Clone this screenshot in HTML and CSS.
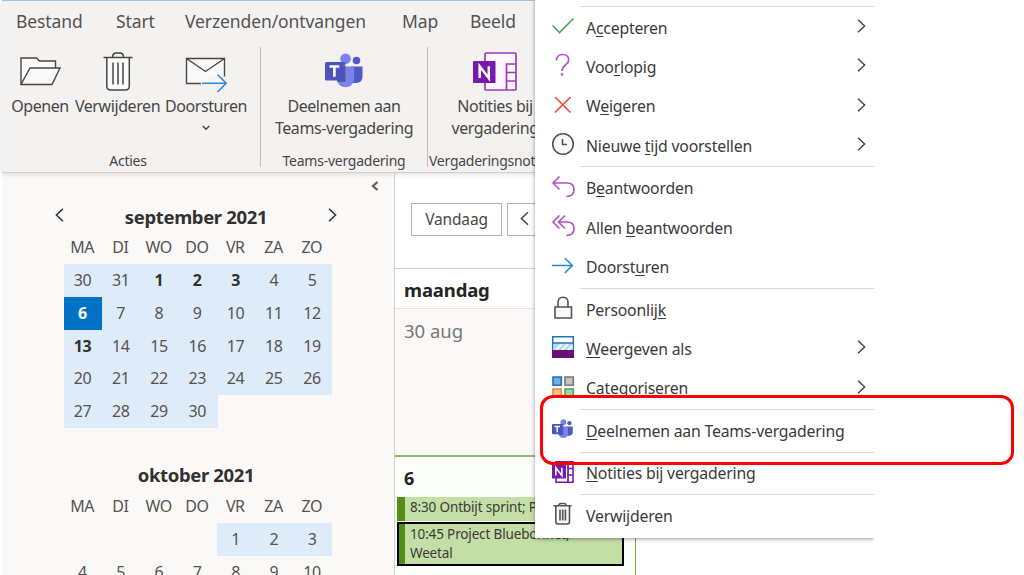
FILE: index.html
```html
<!DOCTYPE html>
<html lang="nl">
<head>
<meta charset="utf-8">
<title>Agenda</title>
<link rel="stylesheet" href="styles.css">
</head>
<body>
<svg class="defs" width="0" height="0">
  <symbol id="chev" viewBox="0 0 9 14"><path d="M1 .8 7.6 7 1 13.2" fill="none" stroke="currentColor" stroke-width="1.5"/></symbol>
  <symbol id="teams" viewBox="0 0 38 36">
    <circle cx="31.5" cy="7.5" r="3.8" fill="#5059c9"/><path d="M26 13.5h11.5V24a6 6 0 0 1-6 6H26z" fill="#5059c9"/>
    <circle cx="20.5" cy="5.8" r="5.3" fill="#7b83eb"/><path d="M12 13.5h17V27a8.6 8.6 0 0 1-17 0z" fill="#7b83eb"/>
    <path d="M12 9h8.5v20H12z" fill="#444c9c" opacity=".75"/>
    <rect x="0" y="9" width="18.5" height="18.5" rx="1.5" fill="#4b53bc"/>
    <path d="M4.5 13.5h9.8M9.4 13.5v10.2" stroke="#fff" stroke-width="2.6" fill="none"/>
  </symbol>
  <symbol id="onenote" viewBox="0 0 44 40">
    <rect x="12" y="1" width="31" height="37" rx="1" fill="#fcf8fe" stroke="#9a3bbd" stroke-width="1.7"/>
    <path d="M33.5 38V12H43M33.5 20.5H43M33.5 29H43" fill="none" stroke="#9a3bbd" stroke-width="1.7"/>
    <rect x="0" y="9" width="22.5" height="22" rx="1" fill="#7719aa"/>
    <path d="M6.7 26V14.3L15.8 26V14.3" fill="none" stroke="#fff" stroke-width="2.5"/>
  </symbol>
</svg>
<div class="screen">
  <div class="window">
    <header class="ribbon">
      <nav class="tabs">
        <span class="tab t1">Bestand</span><span class="tab t2">Start</span><span class="tab t3">Verzenden/ontvangen</span><span class="tab t4">Map</span><span class="tab t5">Beeld</span>
      </nav>
      <div class="groups">
        <section class="group g1">
          <div class="cmds">
            <div class="cmd c1">
              <svg class="ico" width="42" height="40"><path d="M2 32.500V6h15.500l3 3H36.500v7" fill="#fafafa" stroke="#484644" stroke-width="1.400"/><path d="M2 32.500 11 16H41L33 32.500z" fill="#fafafa" stroke="#484644" stroke-width="1.400"/></svg>
              <span>Openen</span>
            </div>
            <div class="cmd c2">
              <svg class="ico" width="30" height="40"><path d="M3.500 5.500h23V35q0 3-3 3h-17q-3 0-3-3z" fill="#fafafa"/><path d="M.5 5.500h29M9.500 5.500q0-4.500 4-4.500h3q4 0 4 4.500M3.800 5.500V34q0 4 4 4h14.500q4 0 4-4V5.500M10 10.500v22M15 10.500v22M20 10.500v22" fill="none" stroke="#484644" stroke-width="1.500"/></svg>
              <span>Verwijderen</span>
            </div>
            <div class="cmd c3">
              <svg class="ico" width="42" height="40"><path d="M1.500 6.500h38v25h-38z" fill="#fafafa"/><path d="M16 31.500H1.500v-25h38V25M1.500 6.500l19 13 19-13" fill="none" stroke="#484644" stroke-width="1.400"/><path d="M23 24h19v16H23z" fill="#f3f2f1" opacity=".6"/><path d="M17 31.300h23M32.500 22.500 41.200 31.300 32.500 40" fill="none" stroke="#2b88d8" stroke-width="1.500"/></svg>
              <span>Doorsturen</span>
              <svg class="down" width="8" height="6"><path d="M.8 1 4 4.200 7.200 1" fill="none" stroke="#484644" stroke-width="1.500"/></svg>
            </div>
          </div>
          <div class="gname">Acties</div>
        </section>
        <section class="group g2">
          <div class="cmds">
            <div class="cmd"><svg class="ico teams-big" width="38" height="36"><use href="#teams"/></svg><span>Deelnemen aan<br>Teams-vergadering</span></div>
          </div>
          <div class="gname">Teams-vergadering</div>
        </section>
        <section class="group g3">
          <div class="cmds">
            <div class="cmd"><svg class="ico" width="44" height="40"><use href="#onenote"/></svg><span>Notities bij<br>vergadering</span></div>
          </div>
          <div class="gname">Vergaderingsnotities</div>
        </section>
      </div>
    </header>
    <div class="body">
      <aside class="side">
        <svg class="collapse" width="8" height="10"><path d="M6.500 1 2 5l4.500 4" fill="none" stroke="#605e5c" stroke-width="2.300"/></svg>
        <div class="month">
          <div class="mtitle"><svg class="mnav prev" width="9" height="14"><use href="#chev"/></svg><b>september 2021</b><svg class="mnav next" width="9" height="14"><use href="#chev"/></svg></div>
          <div class="dow"><span>MA</span><span>DI</span><span>WO</span><span>DO</span><span>VR</span><span>ZA</span><span>ZO</span></div>
          <div class="days">
            <i>30</i><i>31</i><i class="b">1</i><i class="b">2</i><i class="b">3</i><i>4</i><i>5</i>
            <i class="b today">6</i><i>7</i><i>8</i><i>9</i><i>10</i><i>11</i><i>12</i>
            <i class="b">13</i><i>14</i><i>15</i><i>16</i><i>17</i><i>18</i><i>19</i>
            <i>20</i><i>21</i><i>22</i><i>23</i><i>24</i><i>25</i><i>26</i>
            <i>27</i><i>28</i><i>29</i><i>30</i>
          </div>
        </div>
        <div class="month second">
          <div class="mtitle"><b>oktober 2021</b></div>
          <div class="dow"><span>MA</span><span>DI</span><span>WO</span><span>DO</span><span>VR</span><span>ZA</span><span>ZO</span></div>
          <div class="days">
            <i class="n"></i><i class="n"></i><i class="n"></i><i class="n"></i><i>1</i><i>2</i><i>3</i>
            <i class="n">4</i><i class="n">5</i><i class="n">6</i><i class="n">7</i><i class="n">8</i><i class="n">9</i><i class="n">10</i>
          </div>
        </div>
      </aside>
      <main class="cal">
        <div class="bar"><span class="btn today-btn">Vandaag</span><span class="btn back"><svg class="flip" width="9" height="15"><use href="#chev"/></svg></span></div>
        <div class="dayname">maandag</div>
        <div class="cell past">30 aug</div>
        <div class="cell now">
          <b class="num">6</b>
          <div class="ev">8:30 Ontbijt sprint; Plein</div>
          <div class="ev sel">10:45 Project Bluebonnet;<br>Weetal</div>
        </div>
      </main>
    </div>
  </div>

  <div class="menu">
    <hr>
    <div class="item"><svg width="24" height="24"><path d="M1.500 11.500 8.500 18.500 22.500 4.500" fill="none" stroke="#4aa564" stroke-width="1.600"/></svg><span>A<u>c</u>cepteren</span><svg class="sub" width="9" height="14"><use href="#chev"/></svg></div>
    <div class="item"><svg width="24" height="24"><path d="M5.500 7.500C5.500 3.500 8 1.500 11.500 1.500s6.200 2.200 6.200 5.400C17.700 12 11 12 11 18" fill="none" stroke="#b04fc0" stroke-width="1.700"/><circle cx="11" cy="21.500" r="1.300" fill="#b04fc0"/></svg><span>Voo<u>r</u>lopig</span><svg class="sub" width="9" height="14"><use href="#chev"/></svg></div>
    <div class="item"><svg width="24" height="24"><path d="M4 4 19.500 19.500M19.500 4 4 19.500" fill="none" stroke="#f04a3e" stroke-width="1.600"/></svg><span>W<u>e</u>igeren</span><svg class="sub" width="9" height="14"><use href="#chev"/></svg></div>
    <div class="item"><svg width="24" height="24"><circle cx="12" cy="12" r="10.300" fill="#fafafa" stroke="#55534f" stroke-width="1.600"/><path d="M11.500 7v5.500H16" fill="none" stroke="#55534f" stroke-width="1.600"/></svg><span>Nieuwe <u>t</u>ijd voorstellen</span><svg class="sub" width="9" height="14"><use href="#chev"/></svg></div>
    <hr>
    <div class="item"><svg width="24" height="24"><path d="M8.500 1.500 2 8l6.500 6.500M2 8h14q7 0 7 6.500 0 7-7.500 7" fill="none" stroke="#b04fc0" stroke-width="1.600"/></svg><span>B<u>e</u>antwoorden</span></div>
    <div class="item"><svg width="24" height="24"><path d="M8.500 1.500 2 8l6.500 6.500M14 1.500 7.500 8l6.500 6.500M8 8h8q7 0 7 6.500 0 7-7.500 7" fill="none" stroke="#b04fc0" stroke-width="1.600"/></svg><span>Allen <u>b</u>eantwoorden</span></div>
    <div class="item"><svg width="24" height="24"><path d="M1 11.500h20M13.800 4 21.300 11.500l-7.500 7.500" fill="none" stroke="#2b88d8" stroke-width="1.600"/></svg><span>Doorst<u>u</u>ren</span></div>
    <hr>
    <div class="item"><svg width="24" height="24"><path d="M4 11h16.500v11H4zM7 11V6.500q0-5.200 5-5.200t5 5.200V11" fill="#fafafa" stroke="#55534f" stroke-width="1.600"/></svg><span>Persoonlij<u>k</u></span></div>
    <div class="item"><svg width="24" height="24"><path d="M1.700 1.700h20.600v20H1.700z" fill="#fff" stroke="#1e72bd" stroke-width="1.500"/><path d="M2 8.500h20v7H2z" fill="#b5d6f0"/><path d="m5 15 6-6M11 15l6-6M17 15l4-4" stroke="#eef6fc" stroke-width="2"/><path d="M2 8h20" stroke="#1e72bd" stroke-width="1.500"/><path d="M1 15h22v8H1z" fill="#6b0f74"/></svg><span><u>W</u>eergeven als</span><svg class="sub" width="9" height="14"><use href="#chev"/></svg></div>
    <div class="item"><svg width="24" height="24"><g stroke-width="1.600"><path d="M2 2h8.300v8.300H2z" fill="#6fb0e4" stroke="#1e72bd"/><path d="M14 2h8.300v8.300H14z" fill="#c4c4c4" stroke="#797775"/><path d="M2 14h8.300v8.300H2z" fill="#fbc08c" stroke="#e8883a"/><path d="M14 14h8.300v8.300H14z" fill="#9cd5a8" stroke="#4aa564"/></g></svg><span>Categor<u>i</u>seren</span><svg class="sub" width="9" height="14"><use href="#chev"/></svg></div>
    <hr>
    <div class="item"><svg class="tm" width="21" height="20"><use href="#teams"/></svg><span><u>D</u>eelnemen aan Teams-vergadering</span></div>
    <hr>
    <div class="item"><svg width="24" height="24"><path d="M5 1.800h17v20.500H5z" fill="#fff" stroke="#7719aa" stroke-width="1.600"/><path d="M17 2v20M17 8.500h5M17 15h5" stroke="#7719aa" stroke-width="1.700"/><path d="M1 4.500h14v14H1z" fill="#7719aa"/><path d="M4.800 15.500V7.700l6 7.800V7.700" fill="none" stroke="#fff" stroke-width="1.600"/></svg><span><u>N</u>otities bij vergadering</span></div>
    <hr>
    <div class="item"><svg width="24" height="24"><path d="M4.500 4v15.500q0 2.500 2.500 2.500h9.500q2.500 0 2.500-2.500V4" fill="#f7f7f7"/><path d="M2.500 3.800h18M8 3.500q0-2 2-2h3q2 0 2 2M4.800 4v15.500q0 2.500 2.500 2.500h8.700q2.500 0 2.500-2.500V4M9 7.500v11M11.700 7.500v11M14.400 7.500v11" fill="none" stroke="#55534f" stroke-width="1.600"/></svg><span>Verwi<u>j</u>deren</span></div>
  </div>
  <div class="highlight"></div>
</div>
</body>
</html>
```

FILE: styles.css
```css
* { box-sizing: border-box; }
body { margin: 0; background: #fff; font-family: "Noto Sans", "Open Sans", sans-serif; color: #484644; }
.defs { position: absolute; }
svg { display: block; flex: none; overflow: visible; }
.screen { position: relative; width: 1024px; height: 575px; overflow: hidden; background: #fff; }
.window { width: 636px; height: 575px; padding-left: 2px; display: flex; flex-direction: column; }

.ribbon { height: 173px; flex: none; background: #f3f2f1; border-top: 1px solid #9dc3e6; border-bottom: 1px solid #d2d0ce; box-shadow: 0 1px 5px rgba(0,0,0,.14); z-index: 1; }
.tabs { height: 40px; display: flex; align-items: center; font-size: 17.500px; letter-spacing: -.1px; color: #555351; white-space: nowrap; }
.tab { flex: none; }
.t1 { margin-left: 14px; width: 100px; }
.t2 { width: 69px; }
.t3 { width: 217px; }
.t4 { width: 68px; }
.groups { display: flex; height: 130px; padding-top: 6px; }
.group { height: 120px; display: flex; flex-direction: column; justify-content: space-between; align-items: center; flex: none; border-right: 1px solid #c0bebc; }
.g1 { width: 259px; }
.g2 { width: 167px; }
.g3 { width: 134px; border: 0; }
.cmds { display: flex; padding-top: 5px; font-size: 16px; line-height: 22px; letter-spacing: -.42px; text-align: center; white-space: nowrap; }
.cmd { display: flex; flex-direction: column; align-items: center; }
.ico { margin-bottom: 3px; }
.teams-big { margin: 1px 0 6px; }
.g1 .cmds { margin-right: 5px; }
.c1 { width: 76px; }
.c2 { width: 79px; }
.c3 { width: 98px; }
.down { margin-top: 8px; }
.g1 .gname { margin-right: 6px; }
.gname { font-size: 14px; line-height: 18px; margin-bottom: -3px; letter-spacing: -.25px; white-space: nowrap; }

.body { display: flex; flex: 1; min-height: 0; }
.side { width: 393px; background: #faf9f8; border-right: 1px solid #d2d0ce; padding: 8px 0 0 62px; flex: none; overflow: hidden; }
.collapse { margin-left: 307px; }
.month { width: 268px; padding-top: 10px; }
.mtitle { height: 30px; display: flex; justify-content: center; align-items: center; position: relative; font-size: 18.500px; letter-spacing: -.35px; color: #323130; }
.mtitle b { margin-right: 4px; }
.mnav { position: absolute; top: 7px; }
.prev { left: -9px; transform: scaleX(-1); }
.next { right: -5px; }
.dow, .days { display: grid; grid-template-columns: repeat(7, 1fr); text-align: center; font-size: 16px; letter-spacing: -.4px; }
.dow { line-height: 32px; height: 33px; color: #555351; }
.dow span { margin-left: -2px; }
.days { grid-auto-rows: 32.800px; line-height: 33px; }
.days i { font-style: normal; background: #deecf9; color: #555351; margin-right: -.5px; padding-right: 2px; }
.days .b { font-weight: 700; color: #323130; }
.days .today { background: #0072c6; color: #fff; }
.days .n { background: none; }
.second { padding-top: 32px; }

.cal { flex: 1; border-right: 1px solid #70ad47; min-width: 0; display: flex; flex-direction: column; }
.bar { height: 96px; padding: 30px 0 0 16px; display: flex; gap: 6px; border-bottom: 1px solid #d2d0ce; flex: none; }
.btn { height: 33px; border: 1px solid #b5b3b1; display: flex; align-items: center; justify-content: center; font-size: 15.500px; line-height: 20px; padding-bottom: 2px; letter-spacing: -.15px; }
.today-btn { width: 91px; }
.back { width: 34px; margin-left: -1px; }
.flip { transform: scaleX(-1); }
.dayname { height: 40px; line-height: 42px; padding-left: 9px; font-weight: 700; font-size: 18.500px; letter-spacing: -.15px; color: #252423; border-bottom: 1px solid #e3e1df; flex: none; }
.past { height: 146px; background: #faf9f8; padding: 9px; font-size: 18.500px; line-height: 26px; color: #797775; flex: none; }
.now { flex: 1; background: #fcfefa; border-top: 2px solid #92b973; padding-left: 2px; color: #3b3a39; }
.num { display: block; height: 40px; line-height: 43px; padding-left: 7px; font-size: 18px; color: #252423; }
.ev { height: 24px; line-height: 20px; font-size: 13.500px; letter-spacing: -.15px; background: #c3dfa5; border-left: 8px solid #528d15; padding-left: 5px; width: 227px; white-space: nowrap; }
.sel { margin-top: 1px; height: 44px; line-height: 18.500px; border: 0; outline: 2px solid #000; outline-offset: -2px; box-shadow: inset 8px 0 #528d15; padding: 3px 0 0 13px; }

.menu { position: absolute; z-index: 2; left: 535px; top: 0; width: 339px; height: 538px; padding-top: 4.750px; background: #fff; box-shadow: 0 1px 4px rgba(0,0,0,.4); clip-path: inset(0 0 -8px -8px); }
.menu hr { height: 1px; margin: 1px 0 1.150px 45px; border: 0; background: #dddbd9; }
.item { height: 39.400px; display: flex; align-items: center; padding: 0 8px 0 16px; font-size: 15.800px; letter-spacing: -.2px; color: #3b3a39; white-space: nowrap; }
.item span { margin-left: 11px; flex: 1; }
.item > svg { margin-top: -3px; }
.item .tm { margin: -3px 2px 0 1px; }
.item u { text-underline-offset: 2px; text-decoration-thickness: 1px; }
.sub { color: #484644; }
.highlight { position: absolute; z-index: 3; left: 540px; top: 395px; width: 474px; height: 70px; border: 3px solid #f00; border-radius: 13px; }
```
